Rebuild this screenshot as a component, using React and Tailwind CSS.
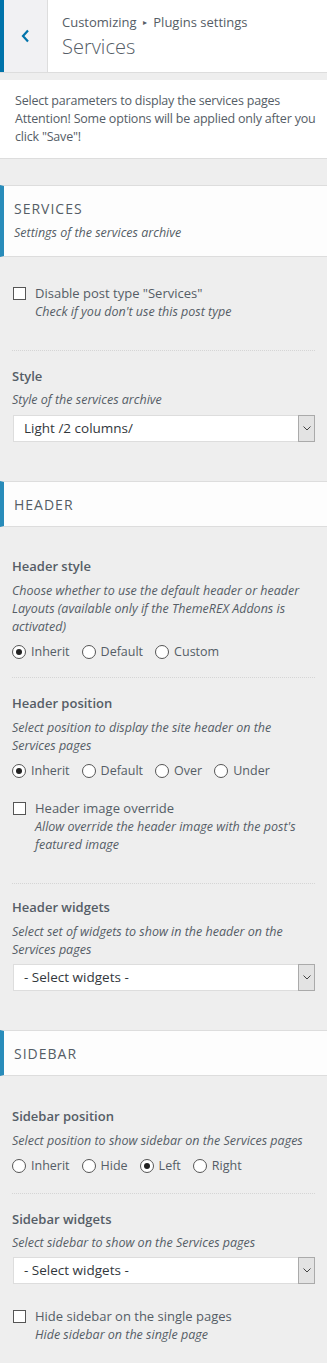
const FONT = { fontFamily: '"Open Sans", "Noto Sans", sans-serif' };

const Radio = ({ label, checked }) => (
  <span className="flex items-center">
    <span className="w-[14px] h-[14px] rounded-full border border-[#555] bg-white flex items-center justify-center shrink-0">
      {checked && <span className="w-[6px] h-[6px] rounded-full bg-[#222]" />}
    </span>
    <span className="ml-[5px]">{label}</span>
  </span>
);

const RadioRow = ({ items, checked, className = '' }) => (
  <div className={`flex gap-[12px] text-[12.5px] leading-[20px] text-[#555d66] ${className}`}>
    {items.map(i => <Radio key={i} label={i} checked={i === checked} />)}
  </div>
);

const Checkbox = ({ label, desc, className = '' }) => (
  <div className={`flex ${className}`}>
    <span className="w-[13px] h-[13px] mt-[4px] ml-[1px] border border-[#555] bg-white shrink-0" />
    <div className="ml-[9px]">
      <div className="text-[13px] leading-[20px] text-[#555d66]">{label}</div>
      <div className="text-[12.5px] leading-[18px] italic text-[#555d66]">{desc}</div>
    </div>
  </div>
);

const Title = ({ children, className = '' }) => (
  <div className={`text-[13px] leading-[20px] font-semibold text-[#555d66] ${className}`}>{children}</div>
);

const Desc = ({ children, className = '' }) => (
  <div className={`text-[12.5px] leading-[18px] italic text-[#555d66] ${className}`}>{children}</div>
);

const Select = ({ value, className = '' }) => (
  <div className={`flex h-[27px] bg-white border border-[#ddd] ml-[1px] ${className}`}>
    <div className="flex-1 pl-[10px] text-[13.5px] leading-[25px] text-[#32373c]">{value}</div>
    <div className="w-[17px] bg-[#e3e3e3] border border-[#aaa] -my-[1px] -mr-[1px] flex items-center justify-center">
      <svg width="8" height="5" viewBox="0 0 8 5" fill="none" stroke="#444" strokeWidth="1">
        <path d="M0.5 0.5 L4 4 L7.5 0.5" />
      </svg>
    </div>
  </div>
);

const Sep = ({ className = '' }) => (
  <div className={`border-t border-dotted border-[#d5d5d5] ${className}`} />
);

const SectionHead = ({ title, desc, className = '' }) => (
  <div className={`bg-[#fdfdfd] border-y border-[#ddd] border-l-4 border-l-[#298cba] pl-[10px] ${desc ? 'pt-[12px] pb-[14px]' : 'pt-[12px] pb-[10px]'} ${className}`}>
    <div className="text-[14px] leading-[22px] tracking-[1px] text-[#555d66] uppercase">{title}</div>
    {desc && <Desc className="mt-[4px]">{desc}</Desc>}
  </div>
);

export default function App() {
  return (
    <div className="w-[327px] min-h-[1363px] bg-[#eeeeee]" style={FONT}>
      {/* top bar */}
      <div className="flex h-[73px] bg-white border-b border-[#ddd]">
        <div className="w-1 bg-[#0073aa]" />
        <div className="w-[44px] bg-[#f1f1f3] border-r border-[#ddd] flex items-center justify-center">
          <svg width="9" height="14" viewBox="0 0 9 14" fill="none" stroke="#0073aa" strokeWidth="2.2">
            <path d="M7 1.5 L2 7 L7 12.5" />
          </svg>
        </div>
        <div className="pl-[14px] pt-[12px]">
          <div className="text-[13px] leading-[20px] text-[#555d66]">
            Customizing <span className="text-[8px] align-[2px] mx-[3px]">▸</span> Plugins settings
          </div>
          <div className="text-[20px] leading-[28px] font-light text-[#555d66] mt-[1px]">Services</div>
        </div>
      </div>

      {/* intro */}
      <div className="mt-[7px] bg-white border-b border-[#ddd] pl-[15px] pr-[4px] py-[12px] text-[12.5px] leading-[18px] tracking-[-0.2px] text-[#555d66]">
        <div>Select parameters to display the services pages</div>
        <div>Attention! Some options will be applied only after you click "Save"!</div>
      </div>

      {/* SERVICES */}
      <SectionHead title="Services" desc="Settings of the services archive" className="mt-[26px]" />
      <div className="px-3 pt-[26px] pb-[39px]">
        <Checkbox label='Disable post type "Services"' desc="Check if you don't use this post type" />
        <Sep className="mt-[29px]" />
        <Title className="mt-[15px]">Style</Title>
        <Desc className="mt-[5px]">Style of the services archive</Desc>
        <Select value="Light /2 columns/" className="mt-[6px]" />
      </div>

      {/* HEADER */}
      <SectionHead title="Header" />
      <div className="px-3 pt-[29px] pb-[39px]">
        <Title>Header style</Title>
        <Desc className="mt-[6px]">Choose whether to use the default header or header Layouts (available only if the ThemeREX Addons is activated)</Desc>
        <RadioRow items={['Inherit', 'Default', 'Custom']} checked="Inherit" className="mt-[6px]" />
        <Sep className="mt-[15px]" />
        <Title className="mt-[15px]">Header position</Title>
        <Desc className="mt-[6px]">Select position to display the site header on the Services pages</Desc>
        <RadioRow items={['Inherit', 'Default', 'Over', 'Under']} checked="Inherit" className="mt-[6px]" />
        <Checkbox label="Header image override" desc="Allow override the header image with the post's featured image" className="mt-[17px]" />
        <Sep className="mt-[29px]" />
        <Title className="mt-[13px]">Header widgets</Title>
        <Desc className="mt-[6px]">Select set of widgets to show in the header on the Services pages</Desc>
        <Select value="- Select widgets -" className="mt-[5px]" />
      </div>

      {/* SIDEBAR */}
      <SectionHead title="Sidebar" />
      <div className="px-3 pt-[30px] pb-[20px]">
        <Title>Sidebar position</Title>
        <Desc className="mt-[6px]">Select position to show sidebar on the Services pages</Desc>
        <RadioRow items={['Inherit', 'Hide', 'Left', 'Right']} checked="Left" className="mt-[6px]" />
        <Sep className="mt-[17px]" />
        <Title className="mt-[15px]">Sidebar widgets</Title>
        <Desc className="mt-[5px]">Select sidebar to show on the Services pages</Desc>
        <Select value="- Select widgets -" className="mt-[5px]" />
        <Checkbox label="Hide sidebar on the single pages" desc="Hide sidebar on the single page" className="mt-[22px]" />
      </div>
    </div>
  );
}
